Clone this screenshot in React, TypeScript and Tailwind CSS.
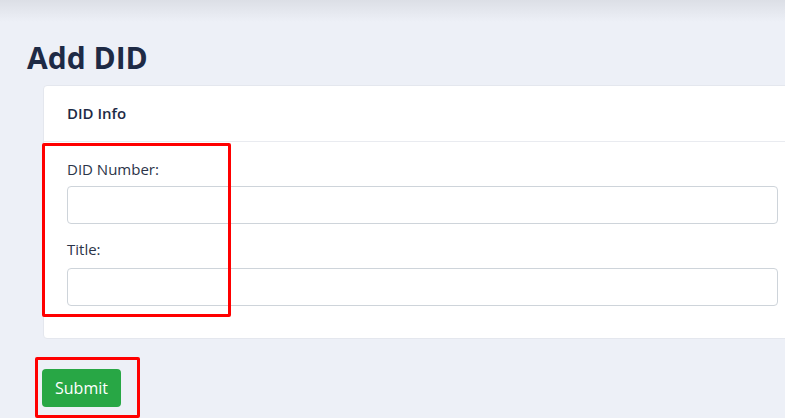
export default function App() {
  return (
    <div
      className="relative w-[785px] h-[418px] overflow-hidden bg-[#edf0f7]"
      style={{ fontFamily: '"Open Sans", "Noto Sans", sans-serif' }}
    >
      <div className="h-[22px] bg-[linear-gradient(to_bottom,#dcdfe6,#edf0f7)]" />
      <div className="pl-[27px]">
        <h1 className="text-[30px] leading-[40px] font-bold text-[#1e2a45] mt-[16px]">Add DID</h1>
      </div>
      <div className="pl-[43px] mt-[7px]">
        <div className="w-[759px] bg-white rounded-[4px] border border-[#e4e7ee]">
          <div className="h-[56px] flex items-center px-[23px] border-b border-[#e9ebf0]">
            <span className="text-[15px] font-semibold text-[#1e2a45]">DID Info</span>
          </div>
          <div className="px-[23px] pt-[16px] pb-[32px]">
            <label className="block text-[15px] leading-[22px] text-[#2b3448] mb-[6px]">DID Number:</label>
            <div className="h-[38px] border border-[#ced4da] rounded-[4px]" />
            <label className="block text-[15px] leading-[22px] text-[#2b3448] mt-[14px] mb-[8px]">Title:</label>
            <div className="h-[38px] border border-[#ced4da] rounded-[4px]" />
          </div>
        </div>
      </div>
      <div className="pl-[42px] mt-[30px]">
        <button className="w-[79px] h-[38px] rounded-[4px] bg-[#28a745] text-white text-[16px]">Submit</button>
      </div>
      <div className="absolute left-[42px] top-[143px] w-[189px] h-[174px] border-[3px] border-[#ff0000] rounded-[2px]" />
      <div className="absolute left-[35px] top-[357px] w-[105px] h-[61px] border-[3px] border-[#ff0000] rounded-[2px]" />
    </div>
  );
}
